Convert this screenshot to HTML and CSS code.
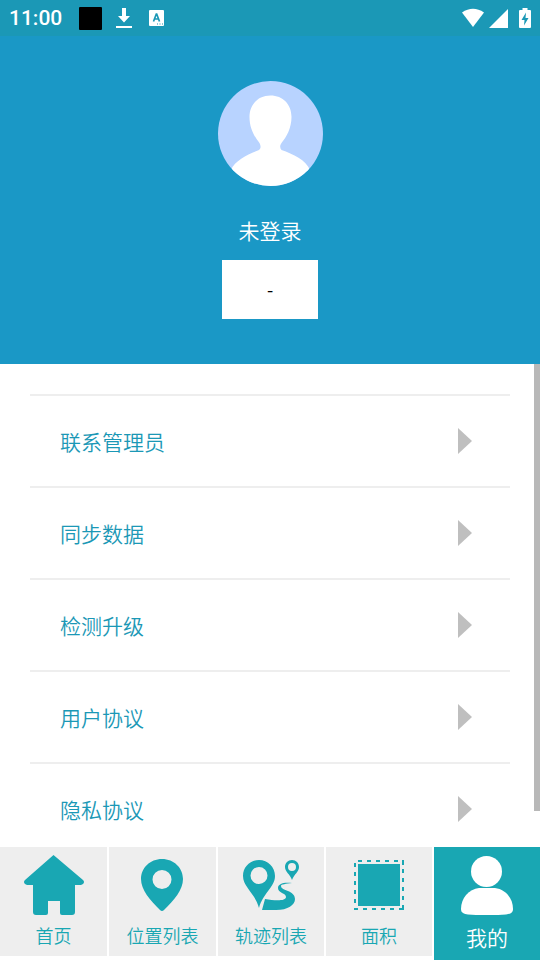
FILE: index.html
```html
<!DOCTYPE html>
<html lang="zh-CN">
<head>
<meta charset="utf-8">
<meta name="viewport" content="width=device-width, initial-scale=1">
<title>我的</title>
<link rel="stylesheet" href="styles.css">
</head>
<body>
<div class="status">
  <span class="clock">11:00</span>
  <span class="app-square"></span>
  <svg class="download" width="16" height="22" viewBox="0 0 16 22" fill="currentColor"><path d="M6 1h4v8h4L8 15.500 2 9h4zM0 19h16v2H0z"/></svg>
  <svg width="16" height="18" viewBox="0 0 16 18"><rect x="0" y="1" width="15" height="16" rx="1" fill="#fff"/><path d="M4.500 12.500 7.300 5h.4L10.500 12.500M5.500 10h4" fill="none" stroke="#1b98b6" stroke-width="1.700"/><path d="M8 14.500h1v1H8zM10.500 14.500h1v1h-1zM13 14.500h1v1h-1z" fill="#1b98b6"/></svg>
  <span class="system">
    <svg width="24" height="20" viewBox="0 0 24 20" fill="currentColor"><path d="M1 4.500Q12-3 23 4.500L12 19z"/></svg>
    <svg width="19" height="19" viewBox="0 0 19 19" fill="currentColor"><path d="M19 0v19H0z"/></svg>
    <svg class="battery" width="12" height="21" viewBox="0 0 12 21"><path d="M3.500 0h5v2H11q1 0 1 1v16q0 1-1 1H1q-1 0-1-1V3q0-1 1-1h2.500z" fill="#fff"/><path d="M7 4.500 2.500 12H5.500L5 17.500 9.500 10H6.500z" fill="#1b98b6"/></svg>
  </span>
</div>
<header class="profile">
  <svg class="avatar" viewBox="0 0 105 105"><defs><clipPath id="disc"><circle cx="52.500" cy="52.500" r="52.500"/></clipPath></defs><g clip-path="url(#disc)"><path fill="#b8d3ff" d="M0 0h105v105H0z"/><path fill="#fff" d="M52.500 14.500C65 14.500 73.500 23.500 73.500 36c0 11-5 20-10 26-2 3-1.500 5 0 7C75 73 88 79 92 89l-8 20H20l-7-20c4-10 18-16 28-20 2-2 2-4 .5-7C36 55 31.500 47 31.500 36c0-12.500 8.500-21.500 21-21.500z"/></g></svg>
  <h1 class="name">未登录</h1>
  <button class="account" type="button">-</button>
</header>
<main class="content">
  <ul class="menu">
    <li><a class="row" href="#contact">联系管理员<svg class="arrow" viewBox="0 0 14 26"><path d="M0 0l14 13L0 26z"/></svg></a></li>
    <li><a class="row" href="#sync">同步数据<svg class="arrow" viewBox="0 0 14 26"><path d="M0 0l14 13L0 26z"/></svg></a></li>
    <li><a class="row" href="#upgrade">检测升级<svg class="arrow" viewBox="0 0 14 26"><path d="M0 0l14 13L0 26z"/></svg></a></li>
    <li><a class="row" href="#terms">用户协议<svg class="arrow" viewBox="0 0 14 26"><path d="M0 0l14 13L0 26z"/></svg></a></li>
    <li><a class="row" href="#privacy">隐私协议<svg class="arrow" viewBox="0 0 14 26"><path d="M0 0l14 13L0 26z"/></svg></a></li>
  </ul>
  <div class="thumb"></div>
</main>
<nav class="tabs">
  <a class="tab" href="#home"><svg class="icon" viewBox="0 0 60 60"><path d="M29.500 0 59 25q2 2 0 4l-2 1h-6v27q0 3-3 3H38q-2 0-2-2V46H24v12q0 2-2 2H12q-3 0-3-3V30H3l-2-1q-2-2 0-4z"/></svg>首页</a>
  <a class="tab" href="#places"><svg class="icon" viewBox="0 0 60 60"><path fill-rule="evenodd" d="M29 4C17 4 8 13 8 24c0 11 9 21 19 31q2 2 4 0C41 45 50 35 50 24 50 13 41 4 29 4zm0 11a9.500 9.500 0 1 1 0 19 9.500 9.500 0 0 1 0-19z"/></svg>位置列表</a>
  <a class="tab" href="#tracks"><svg class="icon" viewBox="0 0 60 60"><path fill-rule="evenodd" d="M18 5C9 5 2 12 2 21c0 11 12 17 16 32 4-15 16-21 16-32C34 12 27 5 18 5zm0 7a8.500 8.500 0 1 1 0 17 8.500 8.500 0 0 1 0-17zM51 5c-4 0-7 3-7 7 0 5 5 7 7 13 2-6 7-8 7-13 0-4-3-7-7-7zm0 3a4 4 0 1 1 0 8 4 4 0 0 1 0-8z"/><path d="M51 28C42 27 37 29 37 33c0 5 8 5 8 9 0 4-10 4-21 2l-3 11h14c12 0 19-5 19-11 0-9-14-8-14-13 0-2 5-2 11-3z"/></svg>轨迹列表</a>
  <a class="tab" href="#area"><svg class="icon" viewBox="0 0 60 60" shape-rendering="crispEdges"><path d="M9 9h42v42H9z"/><path d="M9 5h4v2H9zm9 0h4v2h-4zm9 0h4v2h-4zm9 0h4v2h-4zm9 0h4v2h-4zM53 5h2v5h-2zm0 9h2v4h-2zm0 9h2v4h-2zm0 9h2v4h-2zm0 9h2v4h-2zm0 9h2v5h-5v-2h3zM5 8h2v4H5zm0 9h2v4H5zm0 9h2v4H5zm0 9h2v4H5zm0 9h2v4H5zM5 53h4v2H5zm9 0h4v2h-4zm9 0h4v2h-4zm9 0h4v2h-4zm9 0h4v2h-4z"/></svg>面积</a>
  <a class="tab active" href="#me" aria-current="page"><svg class="icon" viewBox="0 0 60 60"><circle cx="29.500" cy="16.500" r="15.500"/><path d="M22 33h16c10 1 18 10 18 21 0 4-3 5-7 5.500Q30 61 11 59.500C7 59 4 58 4 54c0-11 8-20 18-21z"/></svg>我的</a>
</nav>
</body>
</html>
```

FILE: styles.css
```css
* {
  box-sizing: border-box;
}

body {
  margin: 0;
  height: 100vh;
  display: flex;
  flex-direction: column;
  background: #fff;
  font-family: "Noto Sans CJK SC", sans-serif;
  font-weight: 350;
}

svg {
  display: block;
  flex: none;
}

a {
  text-decoration: none;
}

.status {
  flex: none;
  height: 36px;
  padding: 0 9px;
  display: flex;
  align-items: center;
  background: #1b98b6;
  color: #fff;
}

.clock {
  font: 500 21px/36px Roboto, sans-serif;
}

.app-square {
  width: 23px;
  height: 23px;
  margin: 0 14px 0 17px;
  border-radius: 1px;
  background: #000;
}

.download {
  margin-right: 17px;
}

.system {
  margin-left: auto;
  display: flex;
  align-items: center;
  gap: 4px;
}

.battery {
  margin-left: 7px;
}

.profile {
  flex: none;
  padding: 45px 0;
  display: flex;
  flex-direction: column;
  align-items: center;
  background: #1a98c6;
  color: #fff;
}

.avatar {
  width: 105px;
  height: 105px;
}

.name {
  margin: 30px 0 16px;
  font-size: 21px;
  font-weight: 350;
  line-height: 28px;
}

.account {
  width: 96px;
  height: 59px;
  padding: 0 0 2px;
  border: 0;
  background: #fff;
  color: #000;
  font: 18px "Noto Sans CJK SC", sans-serif;
}

.content {
  flex: 1;
  min-height: 0;
  display: flex;
  overflow: hidden;
}

.menu {
  flex: 1;
  margin: 0;
  padding: 30px 24px 0 30px;
  list-style: none;
}

.row {
  height: 92px;
  padding: 0 38px 0 30px;
  display: flex;
  align-items: center;
  justify-content: space-between;
  border-top: 2px solid #eee;
  color: #1b98b6;
  font-size: 21px;
  line-height: 28px;
}

.arrow {
  width: 14px;
  height: 26px;
  fill: #bfbfbf;
}

.thumb {
  width: 6px;
  height: 92.5%;
  background: #b8b8b8;
}

.tabs {
  flex: none;
  height: 113px;
  display: grid;
  grid-template-columns: repeat(2, 107fr) repeat(3, 106fr);
  gap: 2px;
}

.tab {
  margin-bottom: 4px;
  padding-top: 8px;
  display: flex;
  flex-direction: column;
  align-items: center;
  background: #eee;
  color: #19a7b3;
  font-size: 18px;
  line-height: 24px;
}

.icon {
  width: 60px;
  height: 60px;
  margin-bottom: 8px;
  fill: currentColor;
}

.active {
  margin-bottom: 0;
  background: #19a7b3;
  color: #fff;
  font-size: 21px;
  line-height: 28px;
}
```
